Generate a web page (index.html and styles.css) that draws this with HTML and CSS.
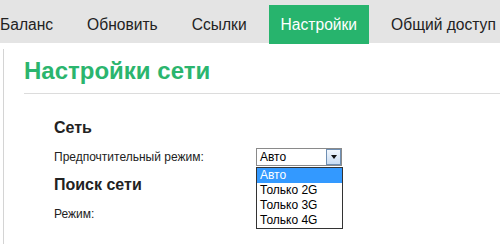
FILE: index.html
```html
<!DOCTYPE html>
<html lang="ru">
<head>
  <meta charset="UTF-8" />
  <title>Настройки сети</title>
  <link rel="stylesheet" href="styles.css">
</head>
<body>

  <nav class="top-nav">
    <a href="#">Баланс</a>
    <a href="#">Обновить</a>
    <a href="#">Ссылки</a>
    <a href="#" class="active">Настройки</a>
    <a href="#">Общий доступ</a>
  </nav>

  <div class="content">
    <h1 class="page-title">Настройки сети</h1>

    <div class="section">
      <h2>Сеть</h2>
      <div class="field">
        <label>Предпочтительный режим:</label>
        <div class="select-box">
          <div class="select">
            <span class="select-value">Авто</span>
            <span class="select-btn"><span class="arrow"></span></span>
          </div>
          <ul class="select-list">
            <li class="selected">Авто</li>
            <li>Только 2G</li>
            <li>Только 3G</li>
            <li>Только 4G</li>
          </ul>
        </div>
      </div>

      <h2>Поиск сети</h2>
      <div class="field">
        <label>Режим:</label>
      </div>
    </div>
  </div>

</body>
</html>
```

FILE: styles.css
```css
html, body {
  height: 100%;
}

body {
  margin: 0;
  padding: 0;
  font-family: "Liberation Sans", Arial, sans-serif;
  color: #222;
  background: #fff;
  overflow: hidden;
}

.top-nav {
  display: flex;
  gap: 10px;
  height: 43px;
  margin-left: -12px;
  padding-top: 5px;
  box-sizing: border-box;
  background: #e4e4e4;
  white-space: nowrap;
}

.top-nav a {
  display: block;
  padding: 0 12px;
  line-height: 39px;
  height: 39px;
  font-size: 15.6px;
  color: #222;
  text-decoration: none;
}

.top-nav a.active {
  background: #27b46d;
  color: #fff;
}

.content {
  height: calc(100% - 49px);
  box-sizing: border-box;
  margin: 6px 0 0 3px;
  padding: 8px 0 0 20px;
  border-left: 1px solid #d4d4d4;
}

.page-title {
  margin: 0;
  padding-bottom: 8px;
  font-size: 24px;
  line-height: 28px;
  color: #2bb56e;
  border-bottom: 1px solid #dcdcdc;
}

.section {
  padding: 25px 0 0 30px;
}

.section h2 {
  margin: 0;
  font-size: 16px;
  line-height: 18px;
}

.field {
  display: flex;
  align-items: center;
  height: 18px;
  margin: 11px 0 10px;
  font-size: 12px;
}

.field label {
  width: 202px;
}

.select-box {
  position: relative;
}

.select {
  display: flex;
  width: 84px;
  height: 16px;
  border: 1px solid #8a8a8a;
  background: #fff;
}

.select-value {
  flex: 1;
  padding-left: 3px;
  line-height: 16px;
  font-size: 12px;
  color: #000;
}

.select-btn {
  display: flex;
  align-items: center;
  justify-content: center;
  width: 13px;
  height: 14px;
  border: 1px solid #6f8fb3;
  background: linear-gradient(#f2f7fd, #c9dcf2);
}

.arrow {
  width: 0;
  height: 0;
  border-left: 3px solid transparent;
  border-right: 3px solid transparent;
  border-top: 4px solid #111;
}

.select-list {
  position: absolute;
  top: 19px;
  left: 0;
  width: 85px;
  margin: 0;
  padding: 0;
  list-style: none;
  border: 1px solid #333;
  background: #fff;
  font-size: 12px;
  color: #000;
}

.select-list li {
  height: 15px;
  line-height: 15px;
  padding-left: 3px;
}

.select-list li.selected {
  background: #3399ff;
  color: #fff;
}
```
